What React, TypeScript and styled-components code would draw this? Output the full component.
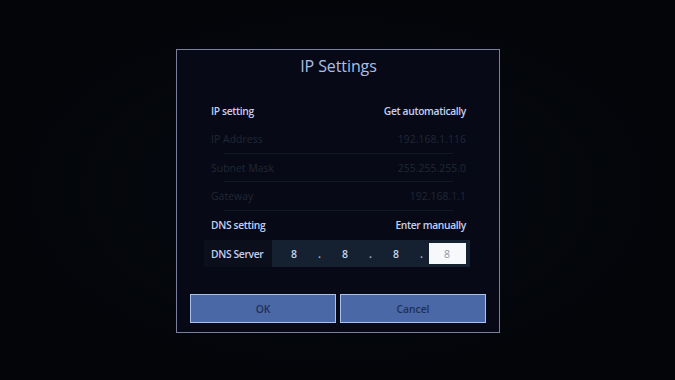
import React from "react";
import styled, { createGlobalStyle } from "styled-components";

const Global = createGlobalStyle`
  html, body { margin: 0; padding: 0; background: #04060a; }
  body { font-family: "Open Sans", "Noto Sans", sans-serif; }
`;

const Screen = styled.div`
  width: 675px;
  height: 380px;
  display: flex;
  align-items: center;
  justify-content: center;
  background: radial-gradient(ellipse at 50% 50%, #070a12 0%, #030509 70%);
`;

const Dialog = styled.div`
  box-sizing: border-box;
  width: 324px;
  height: 284px;
  margin-left: 1px;
  margin-top: 1px;
  border: 1.5px solid #7a7f9c;
  background: #070a16;
  display: flex;
  flex-direction: column;
  padding: 0 33px 0 34px;
`;

const Title = styled.div`
  height: 31px;
  margin-top: 1px;
  display: flex;
  align-items: center;
  justify-content: center;
  color: #aebde6;
  font-size: 16px;
  font-weight: 400;
  letter-spacing: -0.1px;
`;

const List = styled.div`
  display: flex;
  flex-direction: column;
  margin-top: 15px;
`;

const Row = styled.div<{ $sep?: boolean }>`
  position: relative;
  height: 28.5px;
  display: flex;
  align-items: center;
  justify-content: space-between;
  font-size: 10.3px;
  &::after {
    content: "";
    display: ${(p) => (p.$sep ? "block" : "none")};
    position: absolute;
    left: 13px;
    right: 13px;
    bottom: 0;
    height: 1px;
    background: #121724;
  }
`;

const Label = styled.span<{ $dim?: boolean }>`
  color: ${(p) => (p.$dim ? "#21273599" : "#c3d0f2")};
  color: ${(p) => (p.$dim ? "#212735" : "#c3d0f2")};
  font-weight: ${(p) => (p.$dim ? 400 : 600)};
  letter-spacing: ${(p) => (p.$dim ? "0.1px" : "-0.35px")};
`;

const DnsRow = styled.div`
  display: flex;
  align-items: stretch;
  height: 27px;
  margin: 1px -4px 0 -7px;
  background: #0a0f1b;
`;

const DnsLabel = styled.div`
  width: 61px;
  padding-left: 7px;
  display: flex;
  align-items: center;
  color: #c3d0f2;
  font-weight: 600;
  font-size: 10.3px;
  letter-spacing: -0.35px;
`;

const Field = styled.div`
  flex: 1;
  display: flex;
  align-items: center;
  padding: 0 3.5px;
  background: #152030;
`;

const Octet = styled.div<{ $active?: boolean }>`
  width: 37px;
  height: 21px;
  display: flex;
  align-items: center;
  justify-content: center;
  font-size: 10.5px;
  background: ${(p) => (p.$active ? "#f6f8fb" : "transparent")};
  color: ${(p) => (p.$active ? "#8d96a6" : "#c5d6ec")};
  font-weight: ${(p) => (p.$active ? 400 : 600)};
`;

const Dot = styled.div`
  width: 14px;
  text-align: center;
  color: #9fb0c8;
  font-size: 10.5px;
  font-weight: 700;
`;

const Buttons = styled.div`
  display: flex;
  gap: 4px;
  margin: 27px -20px 0 -21px;
`;

const Button = styled.div`
  box-sizing: border-box;
  width: 146px;
  height: 29px;
  display: flex;
  align-items: center;
  justify-content: center;
  background: #4a67a6;
  border: 1.5px solid #a9c2ef;
  color: #203157;
  font-size: 10.3px;
  font-weight: 600;
`;

export default function App() {
  return (
    <>
      <Global />
      <Screen>
        <Dialog>
          <Title>IP Settings</Title>
          <List>
            <Row>
              <Label>IP setting</Label>
              <Label>Get automatically</Label>
            </Row>
            <Row $sep>
              <Label $dim>IP Address</Label>
              <Label $dim>192.168.1.116</Label>
            </Row>
            <Row $sep>
              <Label $dim>Subnet Mask</Label>
              <Label $dim>255.255.255.0</Label>
            </Row>
            <Row $sep>
              <Label $dim>Gateway</Label>
              <Label $dim>192.168.1.1</Label>
            </Row>
            <Row>
              <Label>DNS setting</Label>
              <Label>Enter manually</Label>
            </Row>
            <DnsRow>
              <DnsLabel>DNS Server</DnsLabel>
              <Field>
                <Octet>8</Octet>
                <Dot>.</Dot>
                <Octet>8</Octet>
                <Dot>.</Dot>
                <Octet>8</Octet>
                <Dot>.</Dot>
                <Octet $active>8</Octet>
              </Field>
            </DnsRow>
          </List>
          <Buttons>
            <Button>OK</Button>
            <Button>Cancel</Button>
          </Buttons>
        </Dialog>
      </Screen>
    </>
  );
}
